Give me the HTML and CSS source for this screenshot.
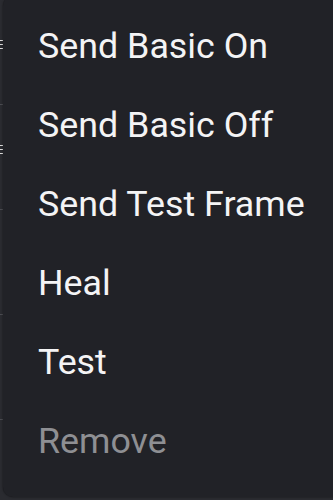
FILE: index.html
```html
<!DOCTYPE html>
<html>
<head>
<meta charset="utf-8">
<link rel="stylesheet" href="styles.css">
</head>
<body>
<div class="page">
  <div class="row"><span class="mark"></span></div>
  <div class="row"><span class="mark"></span></div>
  <div class="row"></div>
  <div class="row"></div>
</div>
<div class="menu">
  <div class="item">Send Basic On</div>
  <div class="item">Send Basic Off</div>
  <div class="item">Send Test Frame</div>
  <div class="item">Heal</div>
  <div class="item">Test</div>
  <div class="item disabled">Remove</div>
</div>
</body>
</html>
```
FILE: styles.css
```css
html, body {
  margin: 0;
  padding: 0;
  width: 333px;
  height: 500px;
  overflow: hidden;
  background: #2a2b30;
  font-family: Roboto, "Noto Sans", sans-serif;
}
.page {
  display: flex;
  flex-direction: column;
}
.row {
  height: 104px;
  border-bottom: 1px solid #4a4b50;
  position: relative;
}
.mark {
  position: absolute;
  left: 0;
  top: 40px;
  width: 3px;
  height: 9px;
  background: repeating-linear-gradient(#dcdcdc 0 1px, transparent 1px 4px);
}
.menu {
  position: absolute;
  left: 3px;
  top: -4px;
  width: 340px;
  box-sizing: border-box;
  padding: 10px 0 17px 0;
  background: #212227;
  border-radius: 10px;
  box-shadow: 0 0 2px rgba(0,0,0,0.6);
  display: flex;
  flex-direction: column;
}
.item {
  height: 79px;
  display: flex;
  align-items: center;
  padding-left: 35px;
  color: #f4f4f5;
  font-size: 35.8px;
  white-space: nowrap;
}
.item.disabled {
  color: #8e8f93;
}
```
